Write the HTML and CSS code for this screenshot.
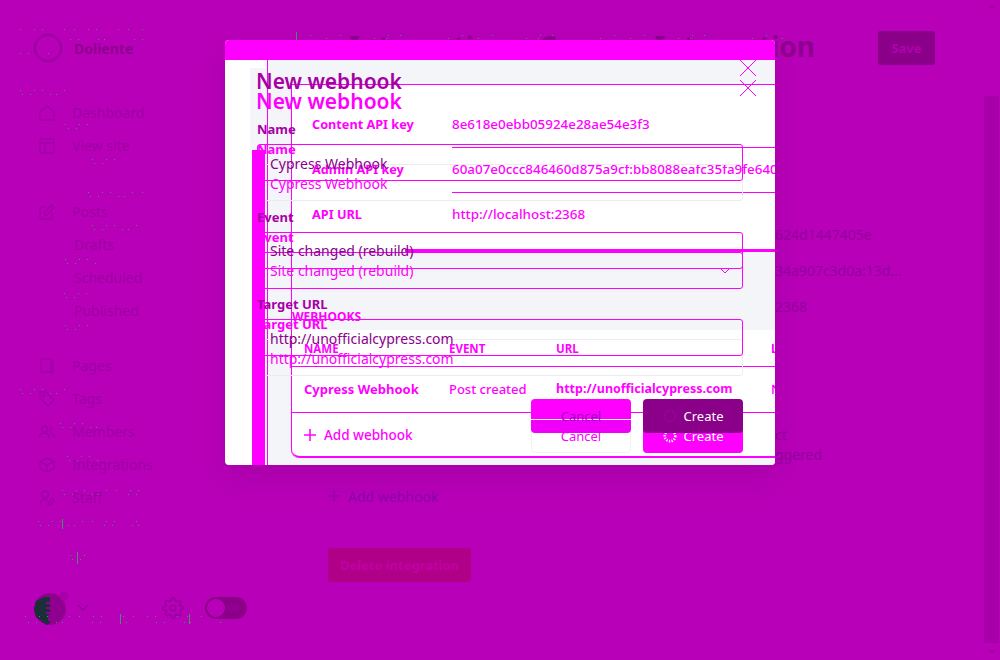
FILE: index.html
```html
<!DOCTYPE html>
<html lang="en">
<head>
    <meta charset="UTF-8">
    <meta name="viewport" content="width=device-width, initial-scale=1.0">
    <title>New webhook</title>
    <link rel="stylesheet" href="styles.css">
</head>
<body>
    <div class="app">
        <aside class="sidebar">
            <div class="brand">
                <svg class="brand-ring" viewBox="0 0 32 32"><circle cx="16" cy="16" r="14"/></svg>
                <span class="brand-name">Doliente</span>
            </div>

            <nav class="nav">
                <a class="nav-item"><svg viewBox="0 0 16 16"><path d="M1 7 8 1l7 6v8H1z"/></svg>Dashboard</a>
                <a class="nav-item"><svg viewBox="0 0 16 16"><rect x="1" y="1" width="14" height="14" rx="1"/><path d="M1 5h14M6 5v10"/></svg>View site</a>
                <a class="nav-item"></a>
                <a class="nav-item"><svg viewBox="0 0 16 16"><path d="M7 3H2a1 1 0 0 0-1 1v10a1 1 0 0 0 1 1h10a1 1 0 0 0 1-1V9"/><path d="M12.5 1 15 3.500 8 11H5.500V8.500z"/></svg>Posts</a>
                <a class="nav-item nav-sub">Drafts</a>
                <a class="nav-item nav-sub">Scheduled</a>
                <a class="nav-item nav-sub">Published</a>
                <a class="nav-item nav-gap"><svg viewBox="0 0 16 16"><rect x="2" y="1" width="10" height="13" rx="1"/><path d="M12 2l2 1v12l-3-.5"/></svg>Pages</a>
                <a class="nav-item"><svg viewBox="0 0 16 16"><path d="M1 1h6l8 8-6 6-8-8z"/><circle cx="4.500" cy="4.500" r="1"/></svg>Tags</a>
                <a class="nav-item"><svg viewBox="0 0 16 16"><circle cx="5.500" cy="5" r="3"/><path d="M0.500 14c0-3 2-5 5-5s5 2 5 5M10.500 2.200a3 3 0 0 1 0 5.600M12 9.300c2 .6 3.500 2.400 3.500 4.700"/></svg>Members</a>
                <a class="nav-item"><svg viewBox="0 0 16 16"><path d="M8 1l7 3.500v7L8 15l-7-3.500v-7zM1 4.500 8 8l7-3.500M8 8v7"/></svg>Integrations</a>
                <a class="nav-item"><svg viewBox="0 0 16 16"><circle cx="6" cy="4.500" r="3.500"/><path d="M1 15c0-3.500 2-5.500 5-5.500 1 0 2 .2 2.500.6M9 15v-2l4.500-4.500 2 2L11 15z"/></svg>Staff</a>
            </nav>

            <div class="sidebar-foot">
                <div class="avatar">
                    <svg viewBox="0 0 38 34">
                        <circle cx="17" cy="18" r="16" class="avatar-back"/>
                        <path d="M11 6 3 10 1 18l2 8 11 8 3-2V6z" class="avatar-mark"/>
                        <path d="M13 11h7v2h-7zM13 16h7v2h-7zM13 21h7v2h-7zM15 24h2v6h-2zM19 23h2v7h-2z" class="avatar-back"/>
                        <circle cx="31" cy="5" r="4.500" class="avatar-dot"/>
                    </svg>
                </div>
                <svg class="foot-chevron" viewBox="0 0 12 8"><path d="M1 1l5 5 5-5"/></svg>
                <svg class="foot-gear" viewBox="0 0 24 24"><circle cx="12" cy="12" r="3"/><path d="M19.400 15a1.650 1.650 0 0 0 .33 1.820l.06.06a2 2 0 0 1 0 2.830 2 2 0 0 1-2.830 0l-.06-.06a1.650 1.650 0 0 0-1.820-.33 1.650 1.650 0 0 0-1 1.510V21a2 2 0 0 1-2 2 2 2 0 0 1-2-2v-.09A1.650 1.650 0 0 0 9 19.400a1.650 1.650 0 0 0-1.820.33l-.06.06a2 2 0 0 1-2.830 0 2 2 0 0 1 0-2.830l.06-.06a1.650 1.650 0 0 0 .33-1.820 1.650 1.650 0 0 0-1.510-1H3a2 2 0 0 1-2-2 2 2 0 0 1 2-2h.09A1.650 1.650 0 0 0 4.600 9a1.650 1.650 0 0 0-.33-1.820l-.06-.06a2 2 0 0 1 0-2.830 2 2 0 0 1 2.830 0l.06.06a1.650 1.650 0 0 0 1.820.33H9a1.650 1.650 0 0 0 1-1.510V3a2 2 0 0 1 2-2 2 2 0 0 1 2 2v.09a1.650 1.650 0 0 0 1 1.510 1.650 1.650 0 0 0 1.820-.33l.06-.06a2 2 0 0 1 2.830 0 2 2 0 0 1 0 2.830l-.06.06a1.650 1.650 0 0 0-.33 1.820V9a1.650 1.650 0 0 0 1.510 1H21a2 2 0 0 1 2 2 2 2 0 0 1-2 2h-.09a1.650 1.650 0 0 0-1.510 1z"/></svg>
                <div class="toggle">
                    <span class="toggle-knob"></span>
                    <svg viewBox="0 0 14 14"><circle cx="7" cy="7" r="2.500"/><path d="M7 0v2M7 12v2M0 7h2M12 7h2M2 2l1.500 1.500M10.500 10.500 12 12M2 12l1.500-1.500M10.500 3.500 12 2"/></svg>
                </div>
            </div>
        </aside>

        <main class="main">
            <header class="main-head">
                <h1>Integrations: Cypress Integration</h1>
                <button class="btn-save">Save</button>
            </header>
            <div class="key-values">
                <div class="key-value">624d1447405e</div>
                <div class="key-value">34a907c3d0a:13d...</div>
                <div class="key-value">2368</div>
            </div>
            <div class="webhook-tail">
                <div>ct</div>
                <div>ggered</div>
            </div>
            <a class="add-link"><svg viewBox="0 0 12 12"><path d="M6 0v12M0 6h12"/></svg>Add webhook</a>
            <button class="btn-delete">Delete integration</button>
        </main>
    </div>

    <div class="scrollbar"></div>

    <!-- stray pixels left over in the sidebar and header -->
    <svg class="specks" viewBox="0 0 1000 660">
        <path class="dash-a" d="M20 29h125M20 90h48M65 124h28M92 159h33M88 192h64M92 225h54M65 259h33M64 293h24M65 325h23M20 389h52M60 423h40M67 456h38M62 490h90M38 521h107M70 555h20M25 616h180"/>
        <path class="dash-b" d="M20 53h30M70 39h75M22 94h46M68 128h22M94 163h28M90 196h60M94 229h50M67 263h30M66 297h20M67 329h20M22 393h48M62 427h36M69 460h34M64 494h86M40 525h103M72 559h16M28 622h200"/>
        <path class="dash-top" d="M296 38h500M310 35h480"/>
        <path class="dash-c" d="M296 32v8M120 614v10M189 614v10M62 519v10M77 552v12"/>
    </svg>

    <div class="modal">
        <div class="modal-strip"></div>
        <div class="modal-body">
            <div class="panel"></div>
            <div class="panel-tab"></div>

            <div class="cards">
                <section class="api-card">
                    <div class="api-row">
                        <span class="api-label">Content API key</span>
                        <span class="api-value">8e618e0ebb05924e28ae54e3f3</span>
                    </div>
                    <div class="api-row">
                        <span class="api-label">Admin API key</span>
                        <span class="api-value">60a07e0ccc846460d875a9cf:bb8088eafc35fa9fe640d0a1c2</span>
                    </div>
                    <div class="api-row">
                        <span class="api-label">API URL</span>
                        <span class="api-value api-last">http://localhost:2368</span>
                    </div>
                </section>
                <h3 class="cards-title">WEBHOOKS</h3>
                <section class="webhook-card">
                    <div class="table-row table-head">
                        <span>NAME</span><span>EVENT</span><span>URL</span><span>LAST</span>
                    </div>
                    <div class="table-row table-body">
                        <b>Cypress Webhook</b><span>Post created</span><b class="table-url">http://unofficialcypress.com</b><span>Not</span>
                    </div>
                    <a class="card-add"><svg viewBox="0 0 12 12"><path d="M6 0v12M0 6h12"/></svg>Add webhook</a>
                </section>
            </div>

            <form class="sheet sheet-under">
                <div class="sheet-head">
                    <h2>New webhook</h2>
                    <svg class="close" viewBox="0 0 16 16"><path d="M0 0l16 16M16 0 0 16"/></svg>
                </div>
                <label class="group">
                    <span class="group-label">Name</span>
                    <span class="field">Cypress Webhook</span>
                </label>
                <label class="group">
                    <span class="group-label">Event</span>
                    <span class="field field-select">Site changed (rebuild)<svg viewBox="0 0 10 6"><path d="M1 1l4 4 4-4"/></svg></span>
                </label>
                <label class="group">
                    <span class="group-label">Target URL</span>
                    <span class="field">http://unofficialcypress.com</span>
                </label>
                <div class="sheet-actions">
                    <span class="btn-cancel">Cancel</span>
                    <span class="btn-create">
                        <svg viewBox="0 0 16 16"><circle cx="8" cy="8" r="6"/></svg>Create
                    </span>
                </div>
            </form>

            <div class="stripe"></div>

            <form class="sheet sheet-over">
                <div class="sheet-head">
                    <h2>New webhook</h2>
                    <svg class="close" viewBox="0 0 16 16"><path d="M0 0l16 16M16 0 0 16"/></svg>
                </div>
                <label class="group">
                    <span class="group-label">Name</span>
                    <span class="field">Cypress Webhook</span>
                </label>
                <label class="group">
                    <span class="group-label">Event</span>
                    <span class="field field-select">Site changed (rebuild)<svg viewBox="0 0 10 6"><path d="M1 1l4 4 4-4"/></svg></span>
                </label>
                <label class="group">
                    <span class="group-label">Target URL</span>
                    <span class="field">http://unofficialcypress.com</span>
                </label>
                <div class="sheet-actions">
                    <span class="btn-cancel">Cancel</span>
                    <span class="btn-create">
                        <svg viewBox="0 0 16 16"><circle cx="8" cy="8" r="6"/></svg>Create
                    </span>
                </div>
            </form>
        </div>
    </div>
</body>
</html>
```

FILE: styles.css
```css
* {
    box-sizing: border-box;
}
body {
    margin: 0;
    width: 1000px;
    height: 660px;
    overflow: hidden;
    position: relative;
    background: #b800b8;
    font-family: "Noto Sans", sans-serif;
}
svg {
    fill: none;
    display: block;
}
.app {
    display: flex;
    height: 660px;
}

/* sidebar */
.sidebar {
    width: 280px;
    height: 660px;
    padding: 33px 0 36px 33px;
    display: flex;
    flex-direction: column;
    color: #9e00a4;
}
.brand {
    display: flex;
    align-items: center;
    gap: 11px;
    height: 30px;
}
.brand-ring {
    width: 30px;
    height: 30px;
    stroke: #a000a4;
    stroke-width: 3;
}
.brand-name {
    font-size: 14px;
    font-weight: 700;
    color: #8e008e;
}
.nav {
    margin-top: 33px;
}
.nav-item {
    height: 33px;
    display: flex;
    align-items: center;
    gap: 17px;
    padding-left: 6px;
    font-size: 14px;
}
.nav-item svg {
    width: 16px;
    height: 16px;
    stroke: #a000a8;
    stroke-width: 1.400;
}
.nav-sub {
    padding-left: 41px;
}
.nav-gap {
    margin-top: 22px;
}
.sidebar-foot {
    margin-top: auto;
    display: flex;
    align-items: center;
    position: relative;
    height: 32px;
}
.avatar {
    width: 38px;
    height: 34px;
}
.avatar-back {
    fill: #8f0090;
}
.avatar-mark {
    fill: #1b2f38;
}
.avatar-dot {
    fill: #a600a6;
}
.foot-chevron {
    width: 12px;
    height: 8px;
    margin-left: 6px;
    stroke: #9000a0;
    stroke-width: 1.400;
}
.foot-gear {
    width: 22px;
    height: 22px;
    margin-left: 73px;
    stroke: #9800a0;
    stroke-width: 1.800;
}
.toggle {
    width: 42px;
    height: 22px;
    margin-left: 21px;
    padding: 2px 6px 2px 2px;
    border-radius: 11px;
    background: #8a0088;
    display: flex;
    justify-content: space-between;
    align-items: center;
}
.toggle-knob {
    width: 18px;
    height: 18px;
    border-radius: 50%;
    background: #b800b8;
}
.toggle svg {
    width: 12px;
    height: 12px;
    stroke: #a400a6;
}

/* page behind the modal */
.main {
    flex: 1;
    padding: 31px 0 0 48px;
    color: #9400a0;
}
.main-head {
    height: 34px;
    display: flex;
    align-items: center;
    margin-left: -31px;
}
.main-head h1 {
    width: 518px;
    margin: -4px 63px 0 0;
    font-size: 28px;
    font-weight: 700;
    color: #8e008e;
    white-space: nowrap;
    display: flex;
    justify-content: flex-end;
}
.btn-save {
    width: 57px;
    height: 34px;
    border: 0;
    border-radius: 3px;
    background: #8a0088;
    color: #b000b0;
    font: 700 13px "Noto Sans", sans-serif;
}
.key-values {
    margin: 152px 0 0 447px;
    font-size: 14px;
}
.key-value {
    height: 36px;
    line-height: 36px;
    white-space: nowrap;
}
.webhook-tail {
    margin: 100px 0 0 447px;
    font-size: 14px;
    line-height: 20px;
}
.add-link {
    margin-top: 21px;
    height: 20px;
    display: flex;
    align-items: center;
    gap: 8px;
    color: #8e00ae;
    font-size: 14px;
}
.add-link svg {
    width: 12px;
    height: 12px;
    stroke: #8e00ae;
}
.btn-delete {
    display: block;
    margin-top: 42px;
    width: 143px;
    height: 34px;
    border: 0;
    border-radius: 3px;
    background: #b00088;
    color: #c000a4;
    font: 700 13px "Noto Sans", sans-serif;
}
.scrollbar {
    position: absolute;
    right: 1px;
    top: 96px;
    width: 15px;
    height: 547px;
    background: #a800a8;
}
.scrollbar::before {
    content: "";
    position: absolute;
    top: -92px;
    left: 4px;
    border: 4px solid transparent;
    border-top: 0;
    border-bottom: 4px solid #a000a0;
}
.scrollbar::after {
    content: "";
    position: absolute;
    bottom: -11px;
    left: 4px;
    border: 4px solid transparent;
    border-bottom: 0;
    border-top: 4px solid #a000a0;
}
.specks {
    position: absolute;
    left: 0;
    top: 0;
    width: 1000px;
    height: 660px;
    stroke: #4f8a6c;
    shape-rendering: crispEdges;
}
.dash-a {
    stroke-dasharray: 1 13 1 7 1 21 1 9;
}
.dash-b {
    stroke-dasharray: 1 7 1 19 1 5 1 29;
}
.dash-top {
    stroke-dasharray: 1 29 1 47 1 11 1 61;
}

/* modal */
.modal {
    position: absolute;
    left: 225px;
    top: 40px;
    width: 550px;
    height: 425px;
    overflow: hidden;
    background: #fff;
    border-radius: 4px;
    box-shadow: 0 14px 30px rgba(70, 0, 70, 0.13);
}
.modal-strip {
    height: 20px;
    background: #f0f;
}
.modal-body {
    position: relative;
    height: 405px;
}
.panel {
    position: absolute;
    left: 42px;
    top: 0;
    right: 0;
    bottom: 0;
    background: #f4f5f8;
    border-left: 1px solid #f0f;
}
.panel-tab {
    position: absolute;
    left: 25px;
    top: 8px;
    width: 17px;
    height: 82px;
    background: #f4f5f8;
}
.stripe {
    position: absolute;
    left: 27px;
    top: 90px;
    bottom: 0;
    width: 13px;
    background: #f0f;
}

/* cards under the form */
.cards {
    position: absolute;
    left: 66px;
    top: 24px;
    right: 0;
    height: 374px;
    border-left: 1px solid #f0f;
    border-bottom-left-radius: 8px;
    color: #f0f;
    font-size: 13px;
}
.api-card {
    position: relative;
    height: 168px;
    padding-top: 18px;
    background: #fff;
    border-top: 1px solid #f0f;
}
.api-card::after {
    content: "";
    position: absolute;
    left: 113px;
    right: 0;
    bottom: 0;
    height: 3px;
    background: #f0f;
}
.api-row {
    display: grid;
    grid-template-columns: 140px 1fr;
    height: 45px;
    padding-left: 20px;
    overflow: hidden;
}
.api-label {
    align-self: center;
    padding-bottom: 3px;
    font-size: 12.700px;
    font-weight: 700;
}
.api-value {
    display: flex;
    align-items: center;
    padding-bottom: 3px;
    font-size: 13.400px;
    font-weight: 500;
    white-space: nowrap;
    border-bottom: 1px solid #f0f;
}
.api-last {
    border-bottom: 0;
}
.cards-title {
    margin: 0;
    height: 78px;
    padding-top: 56px;
    font-size: 12px;
    font-weight: 700;
}
.webhook-card {
    height: 128px;
    background: #fff;
    border-bottom: 2px solid #f0f;
    border-bottom-left-radius: 8px;
}
.table-row {
    display: grid;
    grid-template-columns: 145px 107px 215px 60px;
    align-items: center;
    padding-left: 12px;
    white-space: nowrap;
    border-bottom: 1px solid #f0f;
}
.table-head {
    height: 37px;
    font-size: 11.500px;
    font-weight: 700;
}
.table-body {
    height: 46px;
    padding-bottom: 2px;
    font-weight: 500;
}
.table-url {
    font-size: 12.500px;
}
.card-add {
    height: 44px;
    display: flex;
    align-items: center;
    gap: 8px;
    padding-left: 12px;
    font-size: 13.500px;
    font-weight: 500;
}
.card-add svg {
    width: 12px;
    height: 12px;
    stroke: #f0f;
    stroke-width: 1.500;
}

/* the form, drawn twice */
.sheet {
    position: absolute;
    left: 32px;
    width: 486px;
    margin: 0;
}
.sheet-over {
    top: 8px;
    color: #a600a6;
}
.sheet-under {
    top: 28px;
    color: #f0f;
}
.sheet-head {
    height: 28px;
    margin-bottom: 23px;
    display: flex;
    justify-content: space-between;
}
.sheet-head h2 {
    margin: 0 0 0 -1px;
    font-size: 21px;
    font-weight: 600;
    line-height: 27px;
}
.close {
    width: 16px;
    height: 16px;
    margin: -8px -13px 0 0;
    stroke: #f0f;
}
.group {
    display: block;
    height: 87.500px;
}
.group-label {
    display: block;
    height: 25px;
    line-height: 20px;
    font-size: 13px;
    font-weight: 700;
}
.field {
    height: 37px;
    padding: 1px 12px 0;
    display: flex;
    align-items: center;
    justify-content: space-between;
    border: 1px solid #f0f;
    border-radius: 3px;
    font-size: 14px;
}
.sheet-over .field {
    color: #8a008a;
}
.sheet-under .field {
    border-color: #ebecef;
}
.sheet-under .field-select {
    border-color: #f0f;
}
.field svg {
    width: 10px;
    height: 6px;
    stroke: #f0f;
}
.sheet-actions {
    margin-top: 17.500px;
    display: flex;
    justify-content: flex-end;
    gap: 12px;
}
.btn-cancel,
.btn-create {
    width: 100px;
    height: 34px;
    border-radius: 4px;
    display: flex;
    align-items: center;
    justify-content: center;
    font-size: 13px;
}
.sheet-under .btn-cancel {
    background: #fff;
    border: 1px solid #f2f2f4;
    color: #f0f;
}
.sheet-over .btn-cancel {
    background: linear-gradient(#f0f 20px, #fff 20px, #fff 21px, #f000f8 21px);
    color: #a000c0;
}
.btn-create {
    gap: 7px;
    color: #fff;
}
.btn-create svg {
    width: 14px;
    height: 14px;
    stroke-width: 3;
    stroke-dasharray: 1.500 1.500;
}
.sheet-under .btn-create {
    background: #f0f;
}
.sheet-under .btn-create svg {
    stroke: #fff;
}
.sheet-over .btn-create {
    background: #8a0088;
}
.sheet-over .btn-create svg {
    stroke: #a000a0;
}
```
